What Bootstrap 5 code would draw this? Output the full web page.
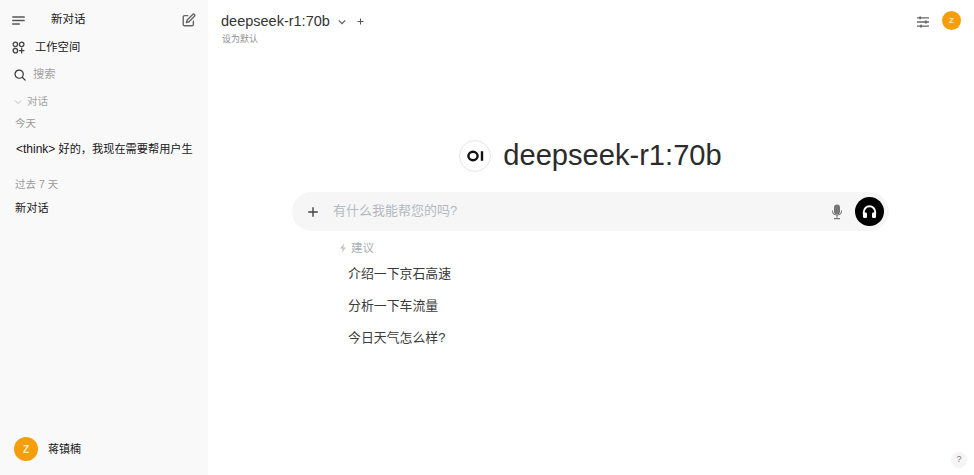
<!DOCTYPE html>
<html lang="zh">
<head>
    <meta charset="UTF-8">
    <meta name="viewport" content="width=device-width, initial-scale=1.0">
    <title>deepseek-r1:70b</title>
    <link href="https://cdn.jsdelivr.net/npm/bootstrap@5.3.0/dist/css/bootstrap.min.css" rel="stylesheet">
    <style>
        html, body { height: 100%; overflow: hidden; }
        body {
            font-family: "Liberation Sans", "Noto Sans CJK SC", sans-serif;
            font-size: 11.5px;
            color: #171717;
            background: #fff;
        }
        .app-shell { height: 475px; }
        .side-bar { width: 208px; background: #f9f9f9; }
        .side-top { height: 34px; padding: 6px 12px 0 12px; }
        .new-title { margin-left: 26px; }
        .side-row { height: 27px; padding-left: 12px; }
        .workspace-icon { width: 13px; height: 13px; }
        .search-icon { width: 12px; height: 12px; margin-left: 2px; }
        .row-label { margin-left: 10px; font-size: 11.3px; }
        .search-label { margin-left: 7px; color: #a3a3a3; }
        .section-head { height: 16px; margin-top: 6px; padding-left: 14px; color: #a3a3a3; font-size: 10.5px; }
        .section-head span { margin-left: 5px; }
        .time-label { padding-left: 15px; color: #9b9b9b; font-size: 10.5px; line-height: 14px; }
        .today-label { margin-top: 6px; }
        .past-label { margin-top: 20px; }
        .chat-row { padding-left: 15px; line-height: 16px; font-size: 11.2px; white-space: nowrap; }
        .chat-first { margin-top: 11px; padding-left: 16px; }
        .chat-second { margin-top: 9px; }
        .think-tag { font-size: 12px; }
        .user-row { padding: 0 0 14px 14px; }
        .avatar-big { width: 24px; height: 24px; font-size: 10px; }
        .avatar-small { width: 19px; height: 19px; font-size: 8px; margin-left: 12px; }
        .avatar-big, .avatar-small { background: #f59e0b; color: #fde9c8; border-radius: 50%; font-weight: 700; }
        .user-name { margin-left: 10px; font-size: 11px; }
        .main-area { min-width: 0; position: relative; }
        .top-bar { height: 50px; padding: 11px 13px 0 13px; }
        .model-name { font-size: 14.5px; color: #333; line-height: 21px; }
        .add-model { margin-left: 11px; }
        .set-default { color: #8f8f8f; font-size: 9px; line-height: 12px; margin-top: 1px; margin-left: 1px; }
        .hero-row { margin-top: 88px; height: 36px; padding-right: 1px; }
        .hero-logo { width: 32px; height: 32px; border: 1px solid #e5e5e5; border-radius: 50%; margin-right: 12px; }
        .hero-title { font-size: 29.1px; color: #2b2b2b; line-height: 35px; margin-bottom: 1px; }
        .prompt-box { width: 597px; height: 39px; margin: 18px 0 0 84px; background: #f6f6f6; border-radius: 20px; padding: 0 5px 0 15px; }
        .prompt-text { margin: 0 0 2px 14px; color: #b4b9bf; font-size: 13px; }
        .voice-btn { width: 29px; height: 29px; background: #000; border-radius: 50%; margin-left: 12px; }
        .suggest-wrap { margin: 10px 0 0 131px; }
        .suggest-head { color: #a8adb3; font-size: 11.5px; line-height: 14px; }
        .suggest-item { margin: 14px 0 0 9px; font-size: 12.900px; color: #3a3a3a; line-height: 18px; }
        .suggest-first { margin-top: 10px; }
        .help-dot { position: absolute; right: 7px; bottom: 7px; width: 16px; height: 16px; background: #f5f5f5; border-radius: 50%; font-size: 9px; color: #777; }
    </style>
</head>
<body>
<div class="app-shell d-flex">
    <aside class="side-bar d-flex flex-column flex-shrink-0">
        <div class="side-top d-flex align-items-center justify-content-between">
            <div class="d-flex align-items-center">
                <svg width="13" height="11" viewBox="0 0 13 11" fill="none" stroke="#555" stroke-width="1.4" stroke-linecap="round"><path d="M.8 2h11.400M.8 5.500h11.400M.8 9h6.500"/></svg>
                <span class="new-title">新对话</span>
            </div>
            <svg width="14" height="14" viewBox="0 0 16 16" fill="none" stroke="#666" stroke-width="1.6" stroke-linecap="round" stroke-linejoin="round"><path d="M13 9.500V13a1.600 1.600 0 0 1-1.600 1.600H3A1.600 1.600 0 0 1 1.400 13V4.600A1.600 1.600 0 0 1 3 3h3.500"/><path d="M12.200 1.600a1.400 1.400 0 0 1 2 2L8 10l-3 .9.9-3z"/></svg>
        </div>
        <div class="side-row d-flex align-items-center">
            <svg class="workspace-icon" viewBox="0 0 14 14" fill="none" stroke="#444" stroke-width="1.4"><circle cx="3.600" cy="3.600" r="2.400"/><circle cx="10.400" cy="3.600" r="2.400"/><circle cx="3.600" cy="10.400" r="2.400"/><path d="M10.400 7.800v5M7.900 10.300h5" stroke-linecap="round"/></svg>
            <span class="row-label">工作空间</span>
        </div>
        <div class="side-row d-flex align-items-center">
            <svg class="search-icon" viewBox="0 0 14 14" fill="none" stroke="#333" stroke-width="1.400" stroke-linecap="round"><circle cx="6" cy="6" r="4.800"/><path d="M9.600 9.600 13 13"/></svg>
            <span class="row-label search-label">搜索</span>
        </div>
        <div class="section-head d-flex align-items-center">
            <svg width="8" height="8" viewBox="0 0 8 8" fill="none" stroke="#bbb" stroke-width="1"><path d="M1 2.500 4 5.500 7 2.500"/></svg>
            <span>对话</span>
        </div>
        <div class="time-label today-label">今天</div>
        <div class="chat-row chat-first"><span class="think-tag">&lt;think&gt;</span> 好的，我现在需要帮用户生</div>
        <div class="time-label past-label">过去 7 天</div>
        <div class="chat-row chat-second">新对话</div>
        <div class="user-row d-flex align-items-center mt-auto">
            <div class="avatar-big d-flex align-items-center justify-content-center">Z</div>
            <span class="user-name">蒋镇楠</span>
        </div>
    </aside>
    <main class="main-area flex-grow-1">
        <div class="top-bar d-flex justify-content-between">
            <div>
                <div class="d-flex align-items-center">
                    <span class="model-name">deepseek-r1:70b</span>
                    <svg class="ms-2" width="8" height="8" viewBox="0 0 8 8" fill="none" stroke="#555" stroke-width="1.100"><path d="M.8 2.400 4 5.600 7.200 2.400"/></svg>
                    <svg class="add-model" width="7" height="7" viewBox="0 0 8 8" fill="none" stroke="#555" stroke-width="1.200"><path d="M4 .6v6.800M.6 4h6.800"/></svg>
                </div>
                <div class="set-default">设为默认</div>
            </div>
            <div class="d-flex align-items-start">
                <svg class="mt-1" width="14" height="14" viewBox="0 0 14 14" fill="none" stroke="#666" stroke-width="1.300"><path d="M1 2.800h12M1 7h12M1 11.200h12"/><path d="M4.200 1.400v2.800M9.800 5.600v2.800M5 9.800v2.800" stroke-width="1.800"/></svg>
                <div class="avatar-small d-flex align-items-center justify-content-center">Z</div>
            </div>
        </div>
        <div class="hero-row d-flex align-items-center justify-content-center">
            <div class="hero-logo d-flex align-items-center justify-content-center">
                <svg width="17" height="12" viewBox="0 0 17 12" fill="none" stroke="#111" stroke-width="2.400"><ellipse cx="6" cy="6" rx="4.600" ry="4.200"/><path d="M15 1.200v9.600"/></svg>
            </div>
            <span class="hero-title">deepseek-r1:70b</span>
        </div>
        <div class="prompt-box d-flex align-items-center">
            <svg width="12" height="12" viewBox="0 0 12 12" fill="none" stroke="#444" stroke-width="1.400"><path d="M6 1.200v9.600M1.200 6h9.600"/></svg>
            <span class="prompt-text flex-grow-1">有什么我能帮您的吗?</span>
            <svg width="12" height="16" viewBox="0 0 12 16" fill="#777"><rect x="3" y="0.5" width="6" height="10" rx="3"/><path d="M1 6.500h1a4 4 0 0 0 8 0h1a5 5 0 0 1-4.500 5V14H9v1.200H3V14h2.500v-2.500A5 5 0 0 1 1 6.500z"/></svg>
            <div class="voice-btn d-flex align-items-center justify-content-center">
                <svg width="15" height="14" viewBox="0 0 15 14" fill="none" stroke="#fff" stroke-width="1.900"><path d="M1.800 9.500V7a5.700 5.700 0 0 1 11.400 0v2.500"/><rect x="1" y="7.500" width="4" height="5.500" rx="1.200" fill="#fff" stroke="none"/><rect x="10" y="7.500" width="4" height="5.500" rx="1.200" fill="#fff" stroke="none"/></svg>
            </div>
        </div>
        <div class="suggest-wrap">
            <div class="suggest-head d-flex align-items-center">
                <svg class="me-1" width="8" height="10" viewBox="0 0 8 10" fill="#c4c4c4"><path d="M5 .5 1 5.600h2.600L3 9.500 7 4.400H4.400z"/></svg>
                <span>建议</span>
            </div>
            <div class="suggest-item suggest-first">介绍一下京石高速</div>
            <div class="suggest-item">分析一下车流量</div>
            <div class="suggest-item">今日天气怎么样?</div>
        </div>
        <div class="help-dot d-flex align-items-center justify-content-center">?</div>
    </main>
</div>
<script src="https://cdn.jsdelivr.net/npm/bootstrap@5.3.0/dist/js/bootstrap.bundle.min.js"></script>
</body>
</html>
